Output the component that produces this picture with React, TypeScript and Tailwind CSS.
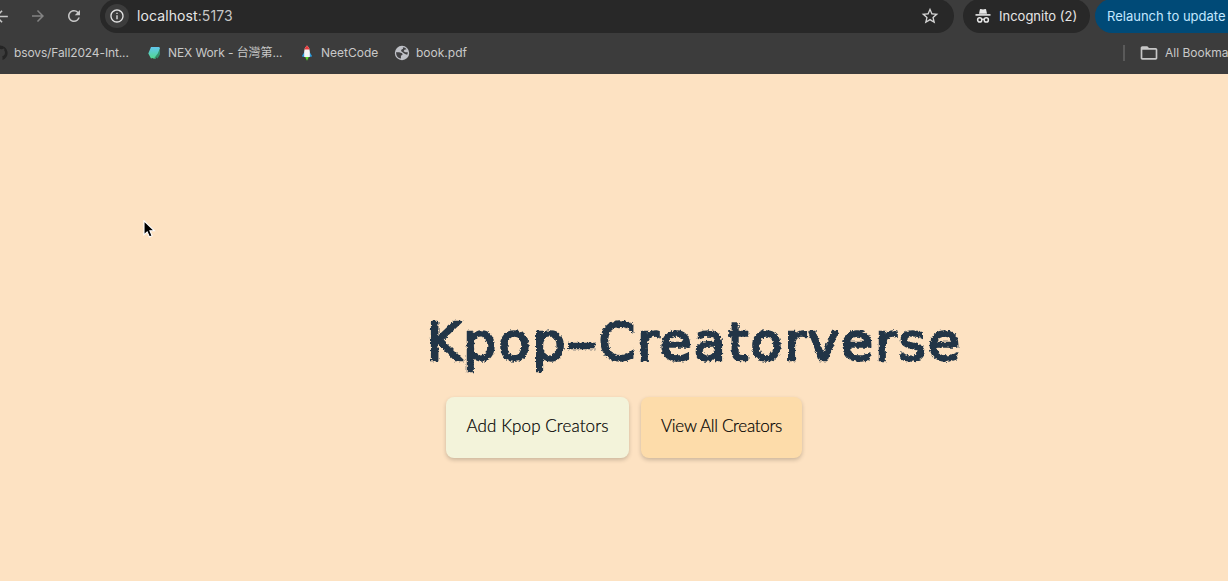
import React from 'react';
import { MdArrowBack, MdArrowForward, MdRefresh, MdInfoOutline, MdStarBorder, MdFolderOpen } from 'react-icons/md';

function Incognito() {
  return (
    <svg className="h-4 w-4 shrink-0" viewBox="0 0 16 16" fill="none">
      <path d="M4 5.7 4.9 1.5Q5 .9 5.7 1.1L8 1.6l2.3-.5q.7-.2.8.4L12 5.7Z" fill="#e6e6e6" />
      <path d="M.5 6.9h15" stroke="#e6e6e6" strokeWidth="1.6" />
      <circle cx="4.7" cy="11.9" r="2.1" stroke="#e6e6e6" strokeWidth="1.5" />
      <circle cx="11.3" cy="11.9" r="2.1" stroke="#e6e6e6" strokeWidth="1.5" />
      <path d="M6.8 11.5q1.2-.7 2.4 0" stroke="#e6e6e6" strokeWidth="1.3" />
    </svg>
  );
}

function Gem() {
  return (
    <svg className="h-4 w-4 shrink-0" viewBox="0 0 16 16">
      <defs>
        <linearGradient id="gem" x1="0" y1="0" x2="0" y2="1">
          <stop offset="0" stopColor="#62c6ee" />
          <stop offset="1" stopColor="#50d88d" />
        </linearGradient>
      </defs>
      <path d="M5 2h8.2l.8 1.2-1.2 5-3.4 5.5H8L6.5 13 5 13.5 2.3 8.5Z" fill="url(#gem)" />
      <path d="M14 3.2v6.3l-2.5 4-1-1.3-1.6 1.6H7.8l4-5.2Z" fill="#348f6a" />
    </svg>
  );
}

function Rocket() {
  return (
    <svg className="h-4 w-4 shrink-0" viewBox="0 0 16 16">
      <path d="M5.4 7 3.3 10.4v1.3h9.4v-1.3L10.6 7Z" fill="#2c9ee0" />
      <path d="M8 .6Q5.2 2.8 5.2 6.2V12h5.6V6.2Q10.8 2.8 8 .6Z" fill="#f4f4f4" />
      <path d="M8 .6Q6 2.2 5.4 4.5h5.2Q10 2.2 8 .6Z" fill="#e5393b" />
      <path d="M6.2 12h3.6L8 15.7Z" fill="#55d82c" />
    </svg>
  );
}

function Globe() {
  return (
    <svg className="h-4 w-4 shrink-0" viewBox="0 0 16 16">
      <circle cx="8" cy="8" r="7.2" fill="#bfc1c7" />
      <path d="M2 7.2h3.2l2.9 1.1.5 1.5-1.7 1 .1 2.8Q2.2 12.8 2 7.2ZM8.8 2.2q2.6.2 3.8 2L10.4 4.7 9.6 6.2l1.7 1 2.5.1q0 1.4-.6 2.4L11 9.1 8.6 7.3 7 6.1 7.6 4.5l1.5-.7Z" fill="#414143" />
    </svg>
  );
}

function GitHubMark() {
  return (
    <svg className="h-4 w-4 shrink-0" viewBox="0 0 16 16">
      <path d="M8 .5a7.5 7.5 0 0 0-2.4 14.6V13q-2 .4-2.6-1.3 1.8.8 2.7-.5Q3 10.8 3 7.6q0-1.2.8-2.1-.4-1.2.1-2.1 1 0 2.2.8 1.9-.5 3.8 0 1.2-.8 2.2-.8.5.9.1 2.1.8.9.8 2.1 0 3.2-2.8 3.6.3.4.3 1.2v2.7A7.5 7.5 0 0 0 8 .5Z" fill="#252525" />
    </svg>
  );
}

function Toolbar() {
  return (
    <div className="flex h-8 items-center text-sm leading-none">
      <MdArrowBack className="-ml-[8px] size-[19px] shrink-0 text-[#c7c7c7]" />
      <MdArrowForward className="ml-[18px] size-[18px] shrink-0 text-[#838383]" />
      <MdRefresh className="ml-[18px] size-[18px] shrink-0 text-[#c7c7c7]" />
      <div className="ml-[17px] flex h-[34px] w-[854px] shrink-0 items-center rounded-full bg-[#282828] pr-[14px] pl-[5px]">
        <div className="flex size-6 items-center justify-center rounded-full bg-[#3c3c3c]">
          <MdInfoOutline className="size-4 text-[#e3e3e3]" />
        </div>
        <div className="ml-2 tracking-[0.1px] text-[#e6e6e6]">localhost<span className="text-[#c7c7c7]">:5173</span></div>
        <MdStarBorder className="ml-auto size-5 text-[#d4d4d4]" />
      </div>
      <div className="ml-[9px] flex h-[34px] w-[127px] shrink-0 items-center rounded-full bg-[#282828] pl-3 text-[13px] text-[#e6e6e6]">
        <Incognito />
        <span className="ml-2 whitespace-nowrap">Incognito (2)</span>
      </div>
      <div className="ml-[5px] flex h-[34px] w-[160px] shrink-0 items-center rounded-l-full bg-[#004a77] pl-3 text-[13px] whitespace-nowrap text-[#c2e7ff]">
        Relaunch to update
      </div>
    </div>
  );
}

function Bookmarks() {
  return (
    <div className="flex h-[42px] items-center overflow-hidden text-xs leading-none whitespace-nowrap text-[#c9c9c9]">
      <div className="-ml-2 flex w-[154px] shrink-0 items-center gap-1.5">
        <GitHubMark /><span className="tracking-[-0.12px]">bsovs/Fall2024-Int...</span>
      </div>
      <div className="flex w-[153px] shrink-0 items-center gap-1.5">
        <Gem /><span className="tracking-[-0.1px]">NEX Work - 台灣第...</span>
      </div>
      <div className="flex w-[95px] shrink-0 items-center gap-1.5">
        <Rocket /><span>NeetCode</span>
      </div>
      <div className="flex w-[80px] shrink-0 items-center gap-1.5">
        <Globe /><span>book.pdf</span>
      </div>
      <div className="ml-[649px] h-4 w-0.5 shrink-0 bg-[#5a5a5a]" />
      <MdFolderOpen className="ml-[14px] size-5 shrink-0 text-[#c7c7c7]" />
      <span className="ml-1.5">All Bookmarks</span>
    </div>
  );
}

export default function App() {
  return (
    <div className="flex h-[581px] w-[1228px] flex-col overflow-hidden bg-[#fde2c2] font-[Inter,'Noto_Sans_CJK_TC',sans-serif]">
      <svg className="absolute size-0" aria-hidden="true">
        <filter id="chalk" x="-5%" y="-10%" width="110%" height="120%">
          <feTurbulence type="fractalNoise" baseFrequency="0.4" numOctaves="2" seed="4" result="noise" />
          <feDisplacementMap in="SourceGraphic" in2="noise" scale="4" xChannelSelector="R" yChannelSelector="G" />
        </filter>
      </svg>
      <header className="h-[74px] shrink-0 bg-[#3c3c3c]">
        <Toolbar />
        <Bookmarks />
      </header>
      <main className="flex grow flex-col pt-[231px]">
        <h1 className="ml-[427px] h-[92px] font-['DejaVu_Sans',sans-serif] text-[52px] leading-[74px] font-normal tracking-[2.2px] whitespace-nowrap text-[#213547] [-webkit-text-stroke:2.4px_#213547] [filter:url(#chalk)]">
          Kpop<span className="mx-[5px] inline-block scale-x-[1.7]">-</span>Creatorverse
        </h1>
        <div className="ml-[446px] flex gap-3 font-[Lato,sans-serif] text-[17px] font-light text-black [-webkit-text-stroke:0.2px_black]">
          <button className="h-[61px] w-[183px] rounded-lg bg-[#f3f3da] pb-1 tracking-[0.1px] whitespace-nowrap shadow-[0_2px_4px_rgba(0,0,0,0.2)]">Add Kpop Creators</button>
          <button className="h-[61px] w-[161px] rounded-lg bg-[#fddcaa] pb-1 tracking-[-0.3px] whitespace-nowrap shadow-[0_2px_4px_rgba(0,0,0,0.2)]">View All Creators</button>
        </div>
      </main>
      <svg className="absolute top-[220px] left-[143px] h-[19px] w-[13px]" viewBox="0 0 13 19">
        <path d="M1 .8v14l3.2-2.9 2.2 5 2.7-1.2-2.2-4.9h4.5Z" fill="#000" stroke="#fff" strokeWidth="1.1" />
      </svg>
    </div>
  );
}
